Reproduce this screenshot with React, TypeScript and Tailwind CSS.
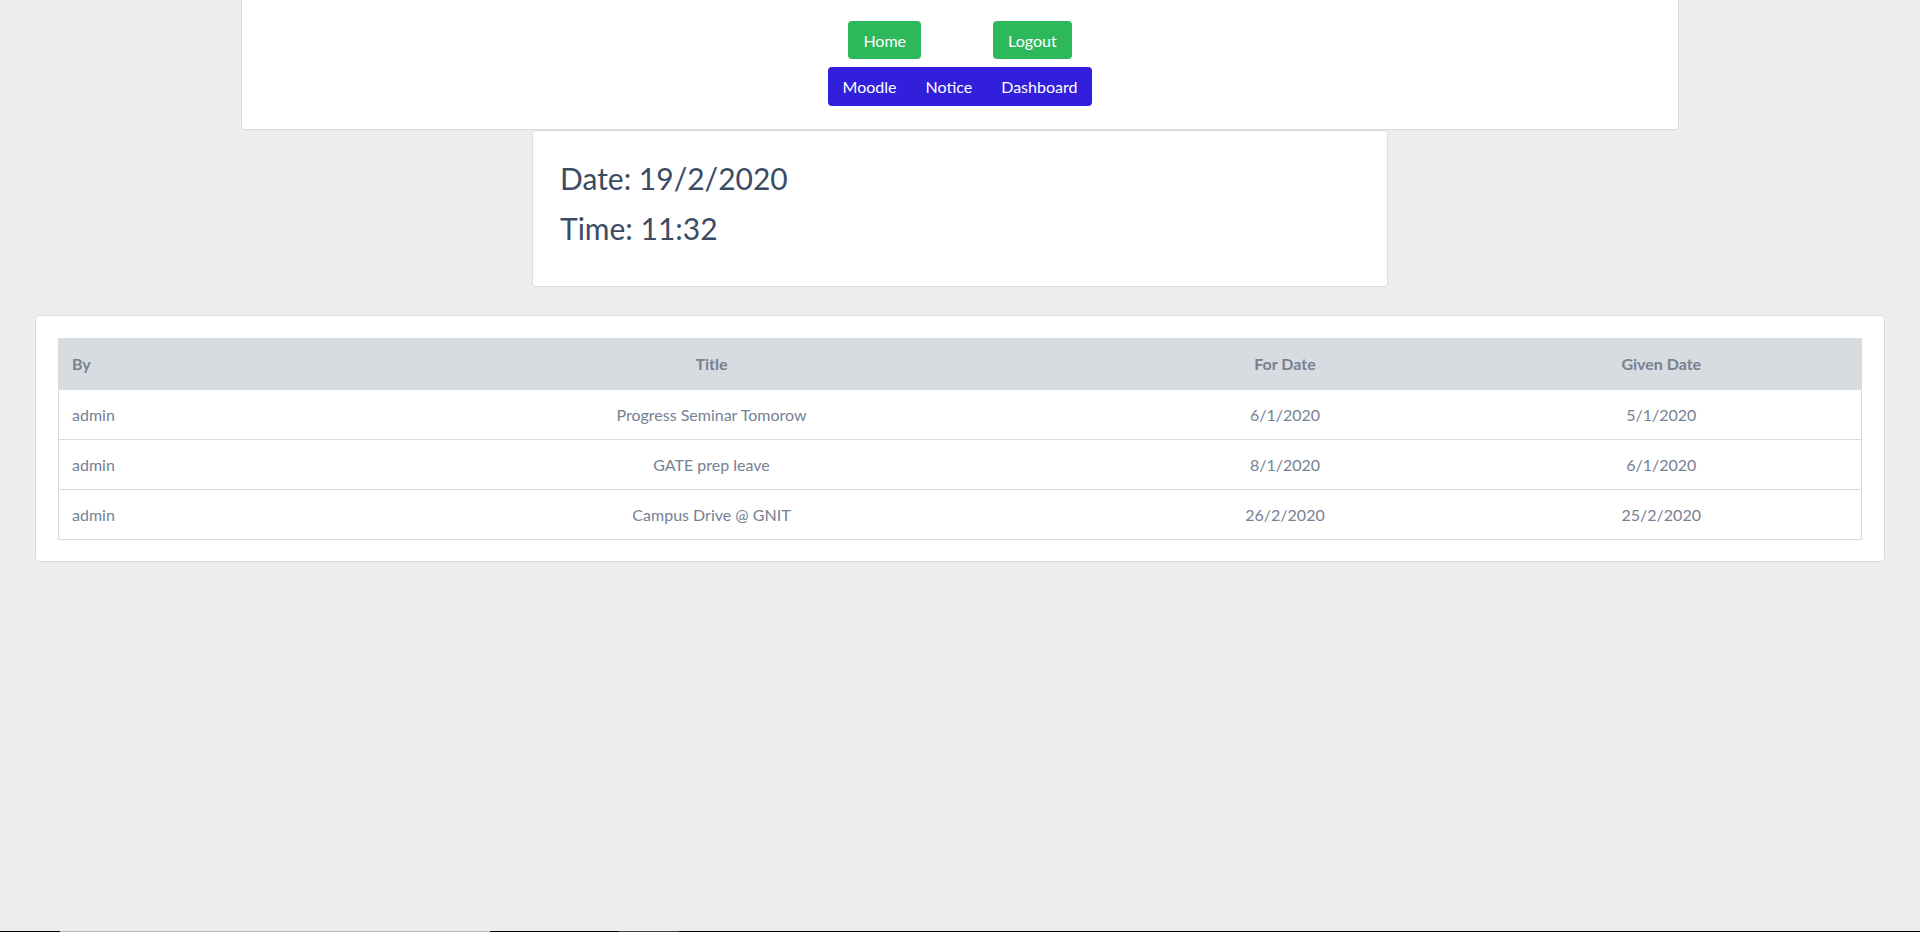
import React from "react";

type Notice = {
  by: string;
  title: string;
  forDate: string;
  givenDate: string;
};

const notices: Notice[] = [
  { by: "admin", title: "Progress Seminar Tomorow", forDate: "6/1/2020", givenDate: "5/1/2020" },
  { by: "admin", title: "GATE prep leave", forDate: "8/1/2020", givenDate: "6/1/2020" },
  { by: "admin", title: "Campus Drive @ GNIT", forDate: "26/2/2020", givenDate: "25/2/2020" },
];

function TopNav() {
  return (
    <div className="mx-auto flex w-[1438px] flex-col items-center gap-2 rounded-b border-x border-b border-[#d8dbe0] bg-white pb-[23px] pt-[21px]">
      <div className="flex gap-[72px]">
        <a className="rounded bg-[#2eb85c] px-[15px] pb-[6px] pt-[8px] leading-6 text-white">Home</a>
        <a className="rounded bg-[#2eb85c] px-[15px] pb-[6px] pt-[8px] leading-6 text-white">Logout</a>
      </div>
      <div className="flex rounded bg-[#321fdb] pb-[7px] pt-[8px] leading-6 text-white">
        <a className="px-[14.5px]">Moodle</a>
        <a className="px-[14.5px]">Notice</a>
        <a className="px-[14.5px]">Dashboard</a>
      </div>
    </div>
  );
}

function Clock() {
  return (
    <div className="mx-auto w-[856px] rounded border border-[#d8dbe0] bg-white pb-[37px] pl-[27px] pt-[26px] text-[#3c4b64]">
      <h2 className="mb-2 text-[30px] leading-[42px]">Date: 19/2/2020</h2>
      <h2 className="text-[30px] leading-[42px]">Time: 11:32</h2>
    </div>
  );
}

function NoticeTable() {
  return (
    <div className="mx-[35px] mt-[28px] rounded border border-[#d8dbe0] bg-white px-[22px] pb-[21px] pt-[22px]">
      <table className="w-full table-fixed border-collapse border border-[#d8dbe0] text-[#768192]">
        <colgroup>
          <col className="w-[256px]" />
          <col className="w-[794px]" />
          <col className="w-[353px]" />
          <col />
        </colgroup>
        <thead>
          <tr className="bg-[#d8dbe0]">
            <th className="pb-[14px] pl-[13px] pr-3 pt-3 text-left font-bold leading-[25px]">By</th>
            <th className="px-3 pb-[14px] pt-3 text-center font-bold leading-[25px]">Title</th>
            <th className="px-3 pb-[14px] pt-3 text-center font-bold leading-[25px]">For Date</th>
            <th className="px-3 pb-[14px] pt-3 text-center font-bold leading-[25px]">Given Date</th>
          </tr>
        </thead>
        <tbody>
          {notices.map((n, i) => (
            <tr key={i} className={i > 0 ? "border-t border-[#d8dbe0]" : ""}>
              <td className="py-3 pl-[13px] pr-3 text-left leading-[25px]">{n.by}</td>
              <td className="px-3 py-3 text-center leading-[25px]">{n.title}</td>
              <td className="px-3 py-3 text-center leading-[25px]">{n.forDate}</td>
              <td className="px-3 py-3 text-center leading-[25px]">{n.givenDate}</td>
            </tr>
          ))}
        </tbody>
      </table>
    </div>
  );
}

export default function App() {
  return (
    <div className="flex h-[932px] flex-col overflow-hidden bg-[#ebedef] font-['Lato','Noto_Sans',sans-serif] text-base">
      <TopNav />
      <Clock />
      <NoticeTable />
      <div className="mt-auto flex h-px">
        <div className="w-[60px] bg-black" />
        <div className="w-[430px] bg-[#b9b9b9]" />
        <div className="w-[128px] bg-black" />
        <div className="w-[61px] bg-[#3f3f3f]" />
        <div className="flex-1 bg-black" />
      </div>
    </div>
  );
}
